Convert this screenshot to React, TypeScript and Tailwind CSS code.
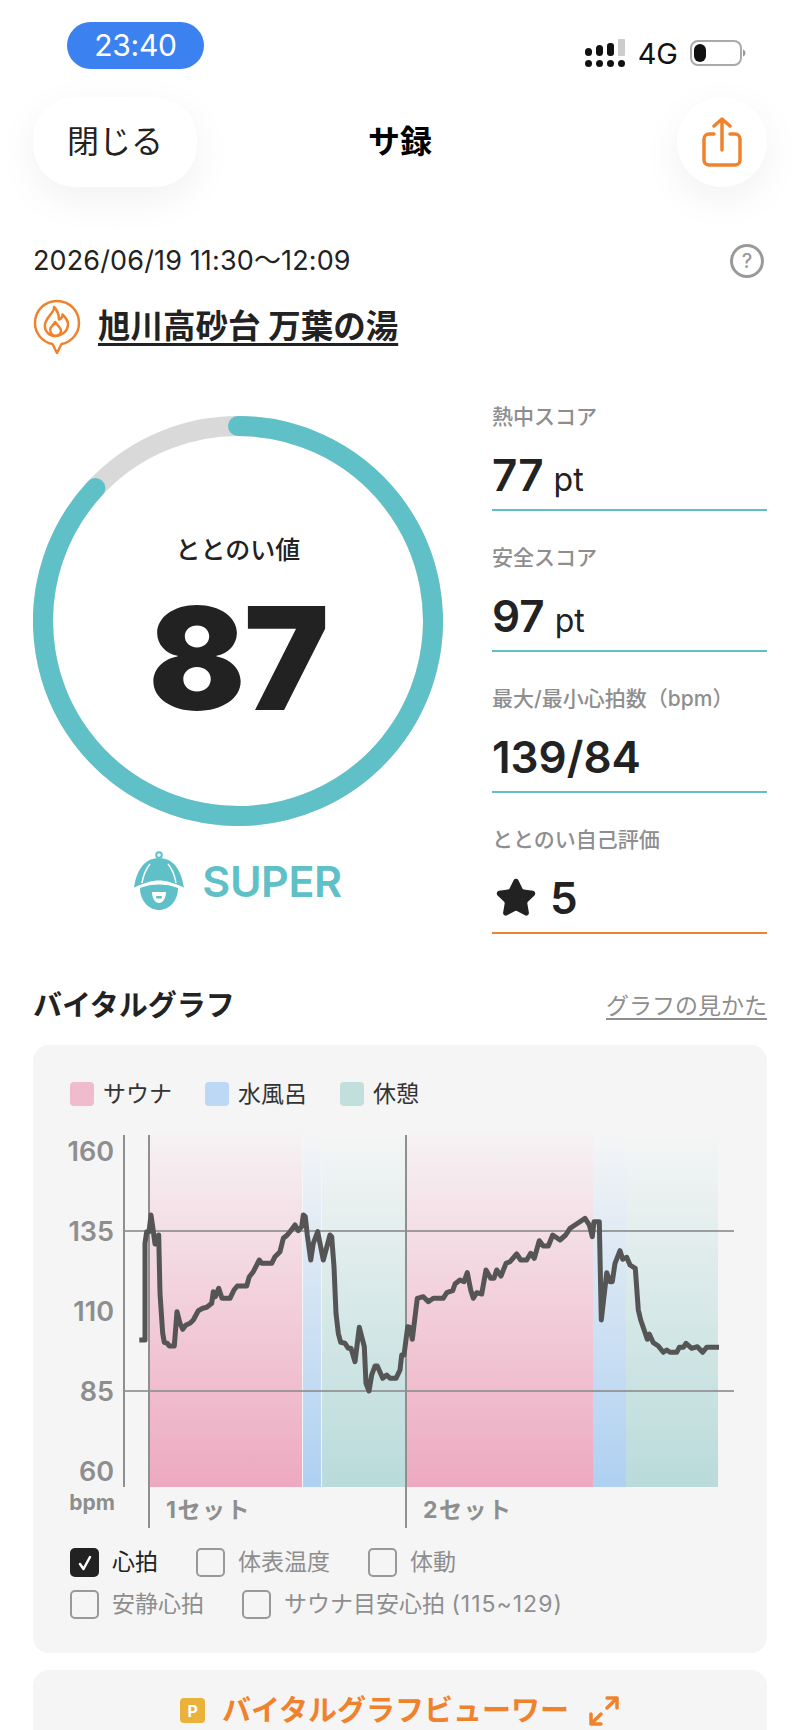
import { Star } from "lucide-react";

const JP = "font-['Inter','Noto_Sans_CJK_JP',sans-serif]";

// heart rate trace, traced off the reference in page pixels
const firstSet: [number, number][] = [
  [328,900],[345,900],[345,610],[350,575],[357,575],[363,525],[368,560],[375,612],[381,612],[386,585],[390,760],[398,880],[403,907],[412,910],[418,918],[433,918],[441,815],[450,850],[458,868],[468,855],[480,850],[490,840],[505,812],[518,805],[530,802],[545,790],[550,755],[556,770],[566,745],[576,775],[600,775],[612,750],[622,738],[650,738],[658,710],[670,695],[688,660],[695,670],[725,670],[735,650],[750,635],[760,595],[772,585],[780,575],[795,555],[805,572],[815,560],[820,525],[826,530],[832,585],[842,660],[850,610],[863,575],[880,660],[900,585],[905,590],[912,680],[918,820],[925,880],[932,907],[945,910],[955,925],[963,925],[975,965],[988,862],[1003,920],[1008,1030],[1017,1053],[1025,1005],[1035,978],[1042,978],[1058,1015],[1070,1005],[1080,1015],[1098,1015],[1110,990],[1115,945],[1122,945],[1133,860],[1140,862],
];
const secondSet: [number, number][] = [
  [37,718],[52,595],[70,590],[85,605],[100,595],[130,595],[140,578],[158,572],[165,552],[180,540],[192,545],[202,518],[212,570],[220,595],[230,578],[245,582],[258,510],[272,535],[282,535],[290,510],[303,528],[318,490],[330,485],[350,462],[362,480],[380,480],[392,460],[403,475],[418,422],[430,438],[445,438],[458,405],[480,420],[497,405],[510,385],[525,375],[555,355],[568,375],[577,410],[582,365],[598,365],[604,660],[620,518],[630,545],[637,545],[645,490],[660,452],[668,478],[680,472],[690,495],[706,505],[715,630],[722,660],[742,718],[748,702],[760,728],[775,738],[790,757],[800,750],[810,757],[830,757],[838,742],[850,742],[858,730],[875,745],[892,740],[908,757],[920,742],[957,742],
];
const heartLine = [
  ...firstSet.map(([x, y]) => `${(x / 3 + 30).toFixed(1)},${(y / 3 + 1040).toFixed(1)}`),
  ...secondSet.map(([x, y]) => `${(x / 3 + 400).toFixed(1)},${(y / 3 + 1100).toFixed(1)}`),
].join(" ");

function StatusBar() {
  return (
    <div className="flex items-start justify-between pl-[67px] pr-[54px] pt-[22px] h-[97px]">
      <div className="w-[137px] h-[47px] rounded-full bg-[#3b82f0] text-white text-[30px] tracking-[-0.01em] flex items-center justify-center font-['Inter',sans-serif]">
        23:40
      </div>
      <div className="flex items-center gap-[12px] mt-[15px]">
        <svg width="42" height="32" viewBox="0 0 42 32">
          <rect x="1" y="23" width="7" height="7" rx="3.500" fill="#111" />
          <rect x="12" y="23" width="7" height="7" rx="3.500" fill="#111" />
          <rect x="23" y="23" width="7" height="7" rx="3.500" fill="#111" />
          <rect x="34" y="23" width="7" height="7" rx="3.500" fill="#111" />
          <rect x="1" y="11" width="7" height="8" rx="3.500" fill="#111" />
          <rect x="12" y="8" width="7" height="11" rx="3.500" fill="#111" />
          <rect x="23" y="6" width="7" height="13" rx="3" fill="#111" />
          <rect x="34" y="2" width="7" height="17" rx="1" fill="#ccc" />
        </svg>
        <span className="text-[29px] leading-none text-[#111] font-['Inter',sans-serif]">4G</span>
        <svg width="56" height="26" viewBox="0 0 56 26">
          <rect x="1" y="1" width="50" height="24" rx="7" fill="none" stroke="#aaa" strokeWidth="2" />
          <rect x="4" y="4" width="12" height="18" rx="6" fill="#111" />
          <path d="M53 9.500c1.500.5 2.500 2 2.500 3.500s-1 3-2.500 3.500z" fill="#999" />
        </svg>
      </div>
    </div>
  );
}

function NavBar() {
  return (
    <div className="grid grid-cols-3 items-center px-[33px] h-[90px]">
      <button className="w-[164px] h-[90px] rounded-[42px] bg-white shadow-[0_12px_40px_rgba(0,0,0,0.06)] text-[32px] text-[#222]">
        閉じる
      </button>
      <h1 className="text-center text-[32px] font-bold text-black">サ録</h1>
      <button className="justify-self-end w-[90px] h-[90px] rounded-full bg-white shadow-[0_12px_40px_rgba(0,0,0,0.06)] flex items-center justify-center">
        <svg width="40" height="50" viewBox="0 0 40 50" fill="none" stroke="#f0822e" strokeWidth="3.500" strokeLinecap="round" strokeLinejoin="round">
          <path d="M12 17H7a5 5 0 0 0-5 5v21a5 5 0 0 0 5 5h26a5 5 0 0 0 5-5V22a5 5 0 0 0-5-5h-5" />
          <path d="M20 33V2M12 9l8-7 8 7" />
        </svg>
      </button>
    </div>
  );
}

function PlaceIcon() {
  return (
    <svg width="48" height="56" viewBox="0 0 48 56" fill="none" stroke="#f0822e" strokeWidth="2.500" strokeLinejoin="round" strokeLinecap="round">
      <path d="M24 2C11.500 2 2 11.800 2 24c0 10.500 7.500 19 17.500 21L24 54l4.500-9C38.500 43 46 34.500 46 24 46 11.800 36.500 2 24 2z" />
      <path d="M21 8C22 13 14 17 12 25C11 32 16 37 22 37C29 37 35 32 35 25C35 21 32 18 29.500 15.500C29.500 18 28 20 26 20.500C26 16 24 11 21 8Z" />
      <path d="M22 37C18 36 16.500 32 17.500 29C18.500 27 21 26 22 23C24 26 28 28 28 32C28 35 25 37 22 37" />
    </svg>
  );
}

function Mascot() {
  return (
    <svg width="54" height="60" viewBox="8 5 54 60">
      <circle cx="33" cy="9" r="2.800" fill="none" stroke="#5fc0c7" strokeWidth="2" />
      <path d="M33 12C17 12 10 27 8 42C17 37 26 34.500 33 34.500C40 34.500 49 37 58 42C56 27 49 12 33 12Z" fill="#5fc0c7" />
      <path d="M24 18C19 24 17 31 16 37M42 18C47 24 49 31 50 37" fill="none" stroke="#fff" strokeWidth="1.500" />
      <path d="M8 42.500C16 38.500 25 36.800 33 36.800C41 36.800 50 38.500 58 42.500" fill="none" stroke="#fff" strokeWidth="1.500" />
      <path d="M14 42C20 39.500 27 38.500 33 38.500C39 38.500 46 39.500 52 42C52 55 43 64 33 64C23 64 14 55 14 42Z" fill="#5fc0c7" />
      <path d="M26 46H40C40 52 37 57 33 57C29 57 26 52 26 46Z" fill="#fff" />
      <rect x="30" y="50" width="6" height="2.500" rx="1" fill="#5fc0c7" />
    </svg>
  );
}

function ScoreRing() {
  return (
    <div className="flex flex-col items-center w-[410px]">
      <div className="relative w-[410px] h-[410px]">
        <svg width="410" height="410" viewBox="0 0 410 410" className="block">
          <circle cx="205" cy="205" r="195" fill="none" stroke="#d9d9d9" strokeWidth="20" />
          <path
            d="M205 10A195 195 0 1 1 62.400 72"
            fill="none"
            stroke="#5fc0c7"
            strokeWidth="20"
            strokeLinecap="round"
          />
        </svg>
        <div className="absolute inset-0 flex flex-col items-center">
          <span className="mt-[117px] text-[25px] leading-[34px] font-medium text-[#222]">ととのい値</span>
          <span className="mt-[17px] text-[143px] leading-[148px] font-black text-[#222] font-['Inter',sans-serif] tracking-[-0.01em]">87</span>
        </div>
      </div>
      <div className="flex items-center gap-[14px] mt-[26px] h-[58px]">
        <Mascot />
        <span className="text-[43px] font-semibold text-[#5fc0c7] font-['Inter',sans-serif] tracking-[-0.01em]">SUPER</span>
      </div>
    </div>
  );
}

function Stat({ label, value, unit, accent = "border-[#5fc0c7]" }: { label: string; value: React.ReactNode; unit?: string; accent?: string }) {
  return (
    <div className={`h-[141px] flex flex-col justify-end border-b-2 ${accent}`}>
      <div className="text-[21px] leading-[30px] font-medium text-[#8e8e8e] whitespace-nowrap">{label}</div>
      <div className="flex items-baseline gap-[10px] mt-[14px] mb-[5px] h-[58px] text-[#222] font-['Inter',sans-serif]">
        <span className="text-[44px] leading-[58px] font-semibold">{value}</span>
        {unit && <span className="text-[32px] leading-[58px]">{unit}</span>}
      </div>
    </div>
  );
}

function VitalChart() {
  const bands = [
    { x: 149, w: 153, id: "pink" },
    { x: 303, w: 18, id: "blue" },
    { x: 322, w: 84, id: "teal" },
    { x: 406, w: 187, id: "pink" },
    { x: 593, w: 33, id: "blue" },
    { x: 626, w: 92, id: "teal" },
  ];
  const yLabels = [
    { y: 1161, t: "160" },
    { y: 1241, t: "135" },
    { y: 1321, t: "110" },
    { y: 1401, t: "85" },
    { y: 1481, t: "60" },
  ];
  return (
    <svg width="734" height="405" viewBox="33 1130 734 405" className="block">
      <defs>
        <linearGradient id="pink" x1="0" y1="0" x2="0" y2="1">
          <stop offset="0" stopColor="#f6f2f4" />
          <stop offset="1" stopColor="#eda9c0" />
        </linearGradient>
        <linearGradient id="blue" x1="0" y1="0" x2="0" y2="1">
          <stop offset="0" stopColor="#f4f5f6" />
          <stop offset="1" stopColor="#aed0f1" />
        </linearGradient>
        <linearGradient id="teal" x1="0" y1="0" x2="0" y2="1">
          <stop offset="0" stopColor="#f4f5f5" />
          <stop offset="1" stopColor="#b9dbda" />
        </linearGradient>
      </defs>
      {bands.map((b) => (
        <rect key={b.x} x={b.x} y="1135" width={b.w} height="352" fill={`url(#${b.id})`} />
      ))}
      <line x1="124" y1="1231" x2="734" y2="1231" stroke="#8f8f8f" strokeOpacity="0.85" strokeWidth="2" />
      <line x1="124" y1="1391" x2="734" y2="1391" stroke="#8f8f8f" strokeOpacity="0.85" strokeWidth="2" />
      <line x1="124" y1="1135" x2="124" y2="1487" stroke="#8f8f8f" strokeWidth="2" />
      <line x1="149" y1="1135" x2="149" y2="1528" stroke="#8f8f8f" strokeWidth="2" />
      <line x1="406" y1="1135" x2="406" y2="1528" stroke="#8f8f8f" strokeWidth="2" />
      <polyline points={heartLine} fill="none" stroke="#555" strokeWidth="5" strokeLinejoin="round" />
      {yLabels.map((l) => (
        <text key={l.t} x="114" y={l.y} textAnchor="end" fontSize="27" fontWeight="600" fill="#8e8e8e" fontFamily="Inter, sans-serif">
          {l.t}
        </text>
      ))}
      <text x="115" y="1510" textAnchor="end" fontSize="21" fontWeight="700" fill="#8e8e8e" fontFamily="Inter, sans-serif">bpm</text>
      <text x="166" y="1518" fontSize="23" fontWeight="700" letterSpacing="1.5" fill="#8e8e8e" fontFamily="Inter, 'Noto Sans CJK JP', sans-serif">1セット</text>
      <text x="423" y="1518" fontSize="23" fontWeight="700" letterSpacing="1.5" fill="#8e8e8e" fontFamily="Inter, 'Noto Sans CJK JP', sans-serif">2セット</text>
    </svg>
  );
}

function Legend({ color, label }: { color: string; label: string }) {
  return (
    <div className="flex items-center gap-[9px]">
      <span className={`w-[24px] h-[24px] rounded-[4px] ${color}`} />
      <span className="text-[23px] leading-[24px] text-[#333]">{label}</span>
    </div>
  );
}

function Check({ label, checked = false }: { label: React.ReactNode; checked?: boolean }) {
  return (
    <div className="flex items-center gap-[13px]">
      {checked ? (
        <span className="w-[29px] h-[29px] rounded-[5px] bg-[#222] flex items-center justify-center">
          <svg width="18" height="18" viewBox="0 0 18 18" fill="none" stroke="#fff" strokeWidth="2.500" strokeLinecap="round" strokeLinejoin="round">
            <path d="M4 10l3.500 5L14 3" />
          </svg>
        </span>
      ) : (
        <span className="w-[29px] h-[29px] rounded-[5px] border-[2.500px] border-[#999]" />
      )}
      <span className={`text-[23px] leading-[29px] ${checked ? "text-[#222]" : "text-[#8e8e8e]"}`}>{label}</span>
    </div>
  );
}

export default function App() {
  return (
    <div className={`w-[800px] h-[1730px] overflow-hidden bg-white ${JP}`}>
      <StatusBar />
      <NavBar />

      <div className="px-[33px]">
        <div className="flex items-center justify-between mt-[57px] h-[34px]">
          <span className="text-[27px] text-[#222] tracking-[0.005em]">2026/06/19 11:30～12:09</span>
          <span className="w-[34px] h-[34px] mr-[3px] rounded-full border-[3px] border-[#999] flex items-center justify-center text-[20px] font-medium text-[#999]">?</span>
        </div>
        <div className="flex items-center gap-[17px] mt-[21px] h-[56px]">
          <PlaceIcon />
          <a className="text-[32.500px] font-bold text-[#222] underline underline-offset-[5px] decoration-[3px]">旭川高砂台 万葉の湯</a>
        </div>

        <div className="flex justify-between mt-[7px]">
          <div className="mt-[54px]">
            <ScoreRing />
          </div>
          <div className="w-[275px] mt-[8px]">
            <Stat label="熱中スコア" value="77" unit="pt" />
            <Stat label="安全スコア" value="97" unit="pt" />
            <Stat label="最大/最小心拍数（bpm）" value="139/84" />
            <Stat
              label="ととのい自己評価"
              accent="border-[#f0822e]"
              value={
                <span className="flex items-center gap-[13px] ml-[3px]">
                  <Star className="w-[42px] h-[42px] fill-[#222] text-[#222]" />5
                </span>
              }
            />
          </div>
        </div>

        <div className="flex items-center justify-between mt-[52px] h-[40px]">
          <h2 className="text-[29px] font-bold text-[#222]">バイタルグラフ</h2>
          <a className="text-[23px] text-[#8e8e8e] underline underline-offset-4">グラフの見かた</a>
        </div>

        <div className="mt-[19px] h-[608px] rounded-[16px] bg-[#f5f5f5] overflow-hidden">
          <div className="flex gap-[33px] pl-[37px] pt-[37px]">
            <Legend color="bg-[#f0bccd]" label="サウナ" />
            <Legend color="bg-[#bcd8f5]" label="水風呂" />
            <Legend color="bg-[#c3dfdd]" label="休憩" />
          </div>
          <div className="mt-[24px]">
            <VitalChart />
          </div>
          <div className="flex gap-[38px] pl-[37px] mt-[13px]">
            <Check label="心拍" checked />
            <Check label="体表温度" />
            <Check label="体動" />
          </div>
          <div className="flex gap-[38px] pl-[37px] mt-[13px]">
            <Check label="安静心拍" />
            <Check label={<>サウナ目安心拍 <span className="tracking-[1px]">(115~129)</span></>} />
          </div>
        </div>

        <div className="mt-[17px] h-[100px] rounded-[16px] bg-[#f5f5f5] flex items-start justify-center pt-[25px] gap-[17px]">
          <span className="w-[25px] h-[25px] mt-[3px] rounded-[4px] bg-[#e9b23a] text-white text-[16px] font-bold flex items-center justify-center">P</span>
          <span className="text-[29px] leading-[32px] font-semibold text-[#f0822e]">バイタルグラフビューワー</span>
          <svg width="32" height="32" viewBox="0 0 32 32" className="ml-[2px]" fill="none" stroke="#f0822e" strokeWidth="3.500" strokeLinecap="round" strokeLinejoin="round">
            <path d="M19 3h10v10M29 3L19 13M3 19v10h10M3 29l10-10" />
          </svg>
        </div>
      </div>
    </div>
  );
}
